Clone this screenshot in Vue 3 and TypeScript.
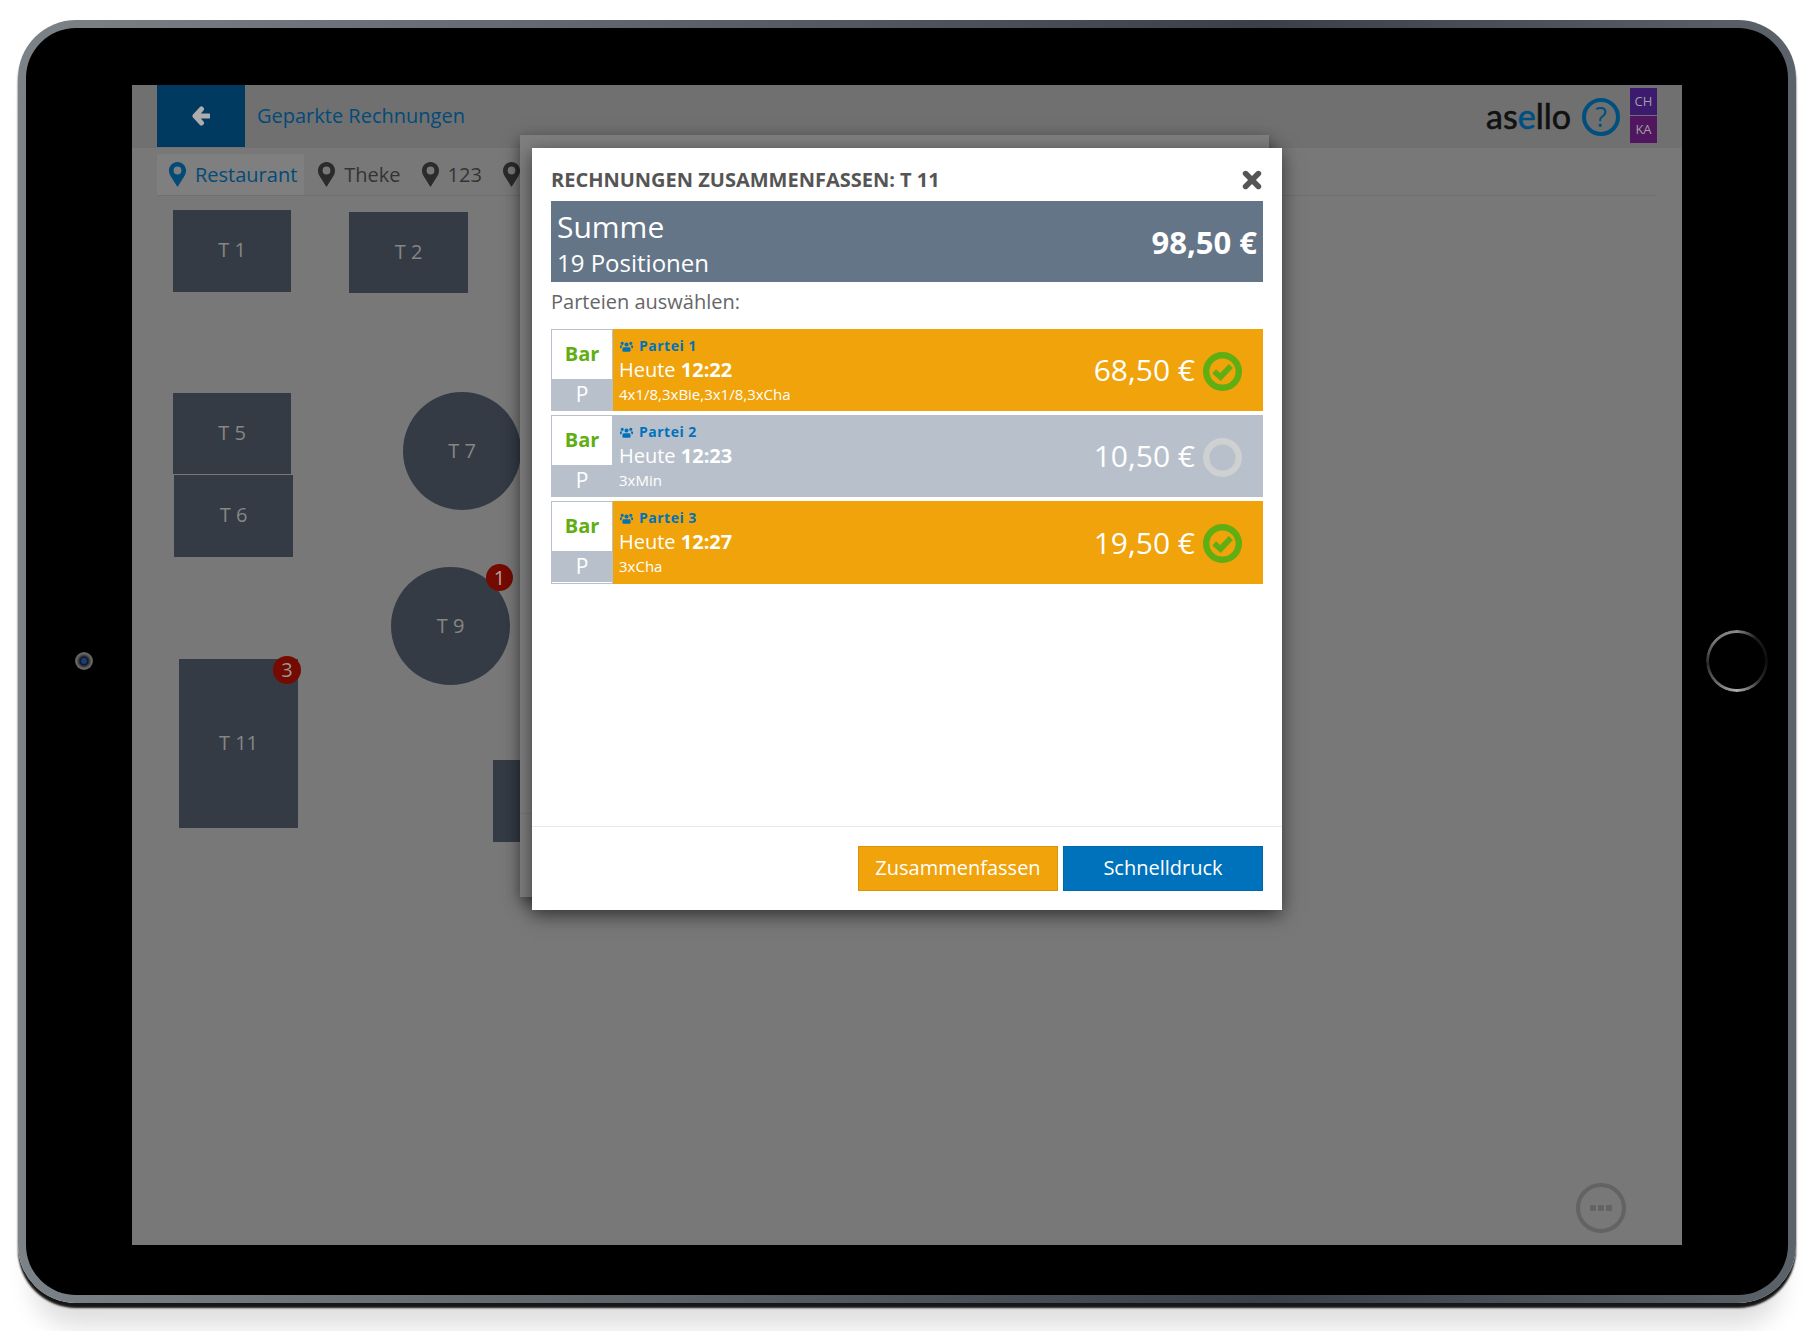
<script setup lang="ts">
interface FloorTable {
  name: string
  x: number
  y: number
  w: number
  h: number
  round?: boolean
  badge?: number
}

interface Party {
  label: string
  day: string
  time: string
  items: string
  price: string
  selected: boolean
}

const FLOOR_LEFT = 132
const FLOOR_TOP = 85

const tables: FloorTable[] = [
  { name: 'T 1', x: 173, y: 210, w: 118, h: 82 },
  { name: 'T 2', x: 349, y: 212, w: 119, h: 81 },
  { name: 'T 5', x: 173, y: 393, w: 118, h: 81 },
  { name: 'T 6', x: 174, y: 475, w: 119, h: 82 },
  { name: 'T 7', x: 403, y: 392, w: 118, h: 118, round: true },
  { name: 'T 9', x: 391, y: 567, w: 119, h: 118, round: true, badge: 1 },
  { name: 'T 11', x: 179, y: 659, w: 119, h: 169, badge: 3 },
  { name: '', x: 493, y: 760, w: 119, h: 82 }
]

const tableStyle = (t: FloorTable) => ({
  left: `${t.x - FLOOR_LEFT}px`,
  top: `${t.y - FLOOR_TOP}px`,
  width: `${t.w}px`,
  height: `${t.h}px`
})

const places = ['Restaurant', 'Theke', '123', '']

const parties: Party[] = [
  { label: 'Partei 1', day: 'Heute', time: '12:22', items: '4x1/8,3xBie,3x1/8,3xCha', price: '68,50 €', selected: true },
  { label: 'Partei 2', day: 'Heute', time: '12:23', items: '3xMin', price: '10,50 €', selected: false },
  { label: 'Partei 3', day: 'Heute', time: '12:27', items: '3xCha', price: '19,50 €', selected: true }
]
</script>

<template>
  <div class="page">
    <div class="device">
      <div class="side side-left"><span class="camera"></span></div>

      <main class="screen">
        <header class="topbar">
          <button class="back" type="button" aria-label="Zurück">
            <svg width="18" height="20" viewBox="0 0 18 20">
              <path d="M9.5 3 3 10l6.500 7M4 10h12.500" fill="none" stroke="#adadad" stroke-width="5" stroke-linejoin="round" stroke-linecap="round" />
            </svg>
          </button>
          <div class="page-title">Geparkte Rechnungen</div>
          <div class="brand">
            <div class="logo">as<span>e</span>llo</div>
            <div class="help">?</div>
            <div class="users">
              <span class="user-ch">CH</span>
              <span class="user-ka">KA</span>
            </div>
          </div>
        </header>

        <nav class="tabs">
          <div v-for="(place, i) in places" :key="i" class="tab" :class="{ active: i === 0 }">
            <svg width="17" height="25" viewBox="0 0 17 25">
              <path fill-rule="evenodd" fill="currentColor" d="M8.5 0C3.8 0 0 3.8 0 8.5c0 2 .6 3.5 1.4 5.2L8.5 25l7.1-11.3c.8-1.7 1.4-3.2 1.4-5.2C17 3.8 13.2 0 8.5 0zm0 4.6a3.9 3.9 0 1 1 0 7.8 3.9 3.9 0 0 1 0-7.8z" />
            </svg>
            <span v-if="place">{{ place }}</span>
          </div>
        </nav>

        <div v-for="t in tables" :key="t.x" class="table" :class="{ round: t.round }" :style="tableStyle(t)">
          {{ t.name }}
          <span v-if="t.badge" class="badge">{{ t.badge }}</span>
        </div>

        <div class="more">
          <i></i><i></i><i></i>
        </div>

        <div class="modal-behind"><div class="behind-line"></div></div>

        <section class="modal">
          <div class="modal-head">
            <h2>RECHNUNGEN ZUSAMMENFASSEN: T 11</h2>
            <svg class="close" width="20" height="20" viewBox="0 0 20 20">
              <path d="M3.600 3.600l12.800 12.800M16.400 3.600 3.600 16.400" stroke="#555" stroke-width="5.600" stroke-linecap="round" />
            </svg>
          </div>

          <div class="modal-body">
            <div class="sum">
              <div class="sum-text">
                <div class="sum-title">Summe</div>
                <div class="sum-count">19 Positionen</div>
              </div>
              <div class="sum-price">98,50 €</div>
            </div>

            <p class="pick">Parteien auswählen:</p>

            <div class="rows">
              <div v-for="p in parties" :key="p.label" class="row" :class="{ selected: p.selected }">
                <div class="pay">
                  <div class="pay-type">Bar</div>
                  <div class="pay-code">P</div>
                </div>
                <div class="info">
                  <div class="party-name">
                    <svg width="13" height="11" viewBox="0 0 13 11">
                      <path fill="#0072bc" d="M6.500 1.400a2.100 2.100 0 1 1 0 4.200 2.100 2.100 0 0 1 0-4.200zM2.200.7a1.600 1.600 0 1 1 0 3.200 1.600 1.600 0 0 1 0-3.200zm8.600 0a1.600 1.600 0 1 1 0 3.200 1.600 1.600 0 0 1 0-3.200zM3.600 6.200h5.800c.9 0 1.200 1 1.200 2.400v1c0 .8-.5 1.200-1.200 1.200H3.600c-.7 0-1.200-.4-1.200-1.200v-1c0-1.400.3-2.400 1.200-2.400zM0 4.600h2.600c-.4.4-.6.8-.8 1.300-.3.5-.3 1-.3 1.300H.7C.2 7.200 0 7 0 6.500zm10.400 0H13v1.900c0 .5-.2.700-.7.700h-.8c0-.3 0-.8-.3-1.300-.2-.5-.4-.9-.8-1.300z" />
                    </svg>
                    {{ p.label }}
                  </div>
                  <div class="party-time">{{ p.day }} <b>{{ p.time }}</b></div>
                  <div class="party-items">{{ p.items }}</div>
                </div>
                <div class="price">{{ p.price }}</div>
                <svg class="tick" width="39" height="39" viewBox="0 0 39 39">
                  <circle cx="19.5" cy="19.5" r="16.300" fill="none" :stroke="p.selected ? '#5fae14' : '#cfd0d2'" stroke-width="6.400" />
                  <path v-if="p.selected" d="M11.200 19.300l6.300 5.700L27.800 14" fill="none" stroke="#5fae14" stroke-width="5.600" />
                </svg>
              </div>
            </div>
          </div>

          <footer class="modal-foot">
            <button class="btn btn-orange" type="button">Zusammenfassen</button>
            <button class="btn btn-blue" type="button">Schnelldruck</button>
          </footer>
        </section>
      </main>

      <div class="side side-right"><span class="home"></span></div>
    </div>
  </div>
</template>

<style scoped>
.page {
  height: 1331px;
  box-sizing: border-box;
  padding: 20px 19px 0 18px;
  overflow: hidden;
  background: #fff;
  font-family: "Open Sans", "Liberation Sans", sans-serif;
}

.device {
  display: flex;
  box-sizing: border-box;
  height: 1283px;
  padding: 57px 0 50px;
  border: 8px solid transparent;
  border-radius: 58px;
  background:
    linear-gradient(#000, #000) padding-box,
    linear-gradient(90deg, #7b8389 0%, #5d646b 35%, #3a4049 70%, #5b6269 100%) border-box;
  box-shadow: 0 5px 2px 0 #161616, 0 38px 24px -14px rgba(0, 0, 0, 0.13);
}

.side {
  display: flex;
  align-items: center;
  flex: 0 0 106px;
  box-sizing: border-box;
  padding-bottom: 8px;
}
.side-left {
  justify-content: center;
  padding-left: 10px;
}
.side-right {
  justify-content: center;
  padding-left: 4px;
}

.camera {
  width: 18px;
  height: 18px;
  border-radius: 50%;
  background: radial-gradient(circle, #1b3c78 0 18%, #0f1626 30%, #3a3a3a 42%, #6a6a6a 60%, #444 80%, #111 100%);
}

.home {
  box-sizing: border-box;
  width: 62px;
  height: 62px;
  border-radius: 50%;
  background: conic-gradient(#8a8a8a 0deg, #1c1c1c 40deg, #0c0c0c 90deg, #2a2a2a 130deg, #b0b0b0 180deg, #666 225deg, #2a2a2a 265deg, #777 310deg, #8a8a8a 360deg);
  -webkit-mask: radial-gradient(circle, transparent 27.500px, #000 28.500px);
  mask: radial-gradient(circle, transparent 27.500px, #000 28.500px);
}

.screen {
  position: relative;
  flex: 1;
  overflow: hidden;
  background: #787878;
}

.topbar {
  display: flex;
  align-items: flex-start;
  height: 63px;
  padding: 0 25px;
  background: #707070;
}

.back {
  display: flex;
  align-items: center;
  justify-content: center;
  width: 88px;
  height: 62px;
  padding: 0;
  border: 0;
  background: #003a60;
}

.page-title {
  margin-left: 12px;
  color: #034a78;
  font-size: 20px;
  line-height: 62px;
}

.brand {
  display: flex;
  align-items: flex-start;
  margin-left: auto;
}

.logo {
  margin-top: 8px;
  color: #111;
  font-family: Lato, "Open Sans", sans-serif;
  font-size: 34px;
  line-height: 46px;
  -webkit-text-stroke: 0.6px currentColor;
}
.logo span {
  color: #004d80;
}

.help {
  box-sizing: border-box;
  width: 38px;
  height: 38px;
  margin: 13px 10px 0 11px;
  border: 4px solid #00507f;
  border-radius: 50%;
  color: #00507f;
  font-size: 27px;
  line-height: 30px;
  text-align: center;
}

.users {
  display: flex;
  flex-direction: column;
  gap: 1px;
  width: 27px;
  margin-top: 3px;
  color: #a0a0a0;
  font-size: 13px;
  line-height: 27px;
  text-align: center;
}
.user-ch {
  background: #3c1b6e;
}
.user-ka {
  background: #50165f;
}

.tabs {
  display: flex;
  gap: 2px;
  height: 41px;
  margin: 6px 25px 0;
  border-bottom: 1px solid #6f6f6f;
}

.tab {
  display: flex;
  align-items: center;
  gap: 9px;
  padding: 0 7px 0 12px;
  color: #2b2b2b;
  font-size: 20px;
}
.tab span {
  color: #333;
}
.tab.active {
  background: #7f7f7f;
  color: #034a78;
}
.tab.active span {
  color: #034a78;
}

.table {
  position: absolute;
  display: flex;
  align-items: center;
  justify-content: center;
  box-sizing: border-box;
  padding-bottom: 3px;
  background: #343b45;
  color: #868686;
  font-size: 20px;
}
.table.round {
  padding-bottom: 1px;
  border-radius: 50%;
}

.badge {
  position: absolute;
  top: -3px;
  right: -3px;
  width: 28px;
  height: 28px;
  border-radius: 50%;
  background: #750a00;
  color: #989898;
  font-size: 20px;
  line-height: 28px;
  text-align: center;
}
.round .badge {
  top: -3px;
  right: -3px;
  width: 27px;
  height: 27px;
  line-height: 27px;
  color: #b5a5a5;
}

.more {
  position: absolute;
  right: 56px;
  bottom: 12px;
  display: flex;
  align-items: center;
  justify-content: center;
  gap: 2px;
  box-sizing: border-box;
  width: 50px;
  height: 50px;
  border: 4px solid #636363;
  border-radius: 50%;
}
.more i {
  width: 6px;
  height: 6px;
  border-radius: 1px;
  background: #636363;
}

.modal-behind {
  position: absolute;
  left: 388px;
  top: 50px;
  width: 749px;
  height: 762px;
  background: #7f7f7f;
  box-shadow: 0 5px 15px rgba(0, 0, 0, 0.5);
}
.behind-line {
  margin-top: 678px;
  border-top: 1px solid #777;
}

.modal {
  position: absolute;
  left: 400px;
  top: 63px;
  display: flex;
  flex-direction: column;
  width: 750px;
  height: 762px;
  background: #fff;
  box-shadow: 0 5px 18px rgba(0, 0, 0, 0.55);
}

.modal-head {
  display: flex;
  align-items: center;
  justify-content: space-between;
  box-sizing: border-box;
  height: 53px;
  padding: 11px 20px 0 19px;
}
.modal-head h2 {
  margin: -2px 0 0;
  color: #555;
  font-size: 20px;
  font-weight: 700;
}

.modal-body {
  flex: 1;
  padding: 0 19px;
}

.sum {
  display: flex;
  align-items: center;
  justify-content: space-between;
  height: 81px;
  padding: 0 6px;
  background: #647587;
  color: #fff;
}
.sum-text {
  padding-top: 2px;
}
.sum-title {
  font-size: 30px;
  line-height: 40px;
}
.sum-count {
  font-size: 24px;
  line-height: 32px;
}
.sum-price {
  font-size: 31px;
  font-weight: 700;
}

.pick {
  margin: 0;
  height: 47px;
  color: #666;
  font-size: 20px;
  line-height: 40px;
}

.rows {
  display: flex;
  flex-direction: column;
  gap: 4px;
}

.row {
  display: flex;
  align-items: center;
  height: 82px;
  background: #b8c1cb;
  color: #fff;
}
.row:last-child {
  height: 83px;
}
.row.selected {
  background: #f0a30a;
}

.pay {
  display: flex;
  flex-direction: column;
  align-self: stretch;
  flex: 0 0 62px;
  box-sizing: border-box;
  padding: 1px 1px 0;
  background: #b8c1cb;
}
.pay-type {
  height: 49px;
  background: #fff;
  color: #5fae14;
  font-size: 20px;
  font-weight: 700;
  line-height: 47px;
  text-align: center;
}
.pay-code {
  flex: 1;
  font-size: 21px;
  font-weight: 400;
  line-height: 30px;
  text-align: center;
}
.row:last-child .pay {
  padding-bottom: 1px;
}
.row:last-child .pay-code {
  border-bottom: 1px solid #fff;
}

.info {
  flex: 1;
  align-self: stretch;
  box-sizing: border-box;
  padding: 8px 0 0 6px;
}
.party-name {
  display: flex;
  align-items: center;
  gap: 6px;
  margin-left: 1px;
  color: #0072bc;
  font-size: 14px;
  font-weight: 700;
  letter-spacing: 0.5px;
  line-height: 18px;
}
.party-time {
  margin-top: 2px;
  font-size: 20px;
  line-height: 26px;
}
.party-items {
  margin-top: 2px;
  font-size: 15px;
  line-height: 18px;
}

.price {
  font-size: 30px;
  line-height: 40px;
}

.tick {
  margin: 2px 21px 0 8px;
}

.modal-foot {
  display: flex;
  justify-content: flex-end;
  gap: 5px;
  padding: 19px;
  border-top: 1px solid #e8e8e8;
}

.btn {
  box-sizing: border-box;
  width: 200px;
  height: 45px;
  padding: 0 0 2px;
  color: #fff;
  font-family: inherit;
  font-size: 20px;
}
.btn-orange {
  border: 1px solid #d9930a;
  background: #f0a30a;
}
.btn-blue {
  border: 1px solid #0067a9;
  background: #0072bc;
}
</style>

<style>
body {
  margin: 0;
  background: #fff;
}
</style>
